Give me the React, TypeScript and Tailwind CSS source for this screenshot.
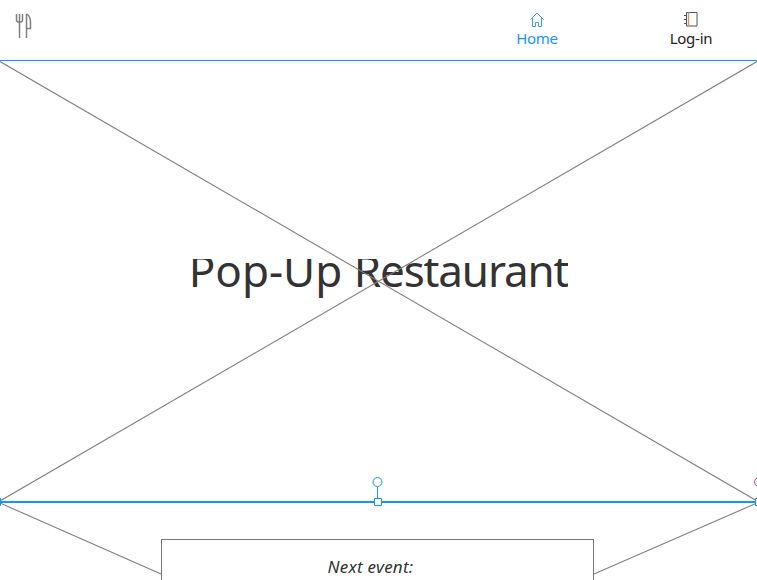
import React from 'react';

function CutleryLogo() {
  return (
    <svg className="block" width="18" height="26" viewBox="0 0 18 26" fill="none" stroke="#808080" strokeWidth="1.5">
      <path d="M1.500 1v6q0 2 2 2h2q2 0 2-2V1M4.500 1v24M11.500 1v24M11 1.500h1.500q3 2 3 8.500v5.500h-4" />
    </svg>
  );
}

function HomeIcon() {
  return (
    <svg className="block" width="14" height="15" viewBox="0 0 14 15" fill="none" stroke="#3d9ff5" strokeWidth="1">
      <path d="M.5 7.500 7 1l6.500 6.500M2.500 6v8.500h3V10.500h3v4h3V6" />
    </svg>
  );
}

function NotebookIcon() {
  return (
    <svg className="block" width="14" height="15" viewBox="0 0 14 15" fill="none" stroke="#555555" strokeWidth="1">
      <path d="M2.500 .5h10.500v13.500H2.500zM0 3.500h2.500M0 7.500h2.500M0 11.500h2.500" />
      <path d="M4.500 .5v13.500" stroke="#d59b5c" strokeWidth="1.500" />
    </svg>
  );
}

function NavItem({ label, active = false, children }: { label: string; active?: boolean; children: React.ReactNode }) {
  return (
    <a className={`flex w-[154px] flex-col items-center pt-3 text-[15px] leading-[22px] tracking-[-0.25px] ${active ? 'text-[#1496f5]' : 'text-[#222222]'}`}>
      {children}
      <span>{label}</span>
    </a>
  );
}

export default function App() {
  return (
    <div className="flex h-[580px] w-[757px] flex-col overflow-hidden bg-white font-['Noto_Sans',sans-serif] text-[#333333]">
      <header className="flex h-[61px] shrink-0 justify-between border-b border-[#0e9af5]">
        <div className="pt-[13px] pl-[15px]"><CutleryLogo /></div>
        <nav className="mr-[-11px] flex">
          <NavItem label="Home" active><HomeIcon /></NavItem>
          <NavItem label="Log-in"><NotebookIcon /></NavItem>
        </nav>
      </header>
      <section className="relative flex h-[440px] shrink-0 justify-center">
        <div className="mt-[198px] h-[45px] overflow-hidden">
          <h1 className="mt-[-19px] text-[44px] leading-[60px] whitespace-nowrap">Pop-Up <span className="tracking-[-1.150px]">Restaurant</span></h1>
        </div>
        <svg className="absolute inset-0" width="757" height="440" stroke="#808080" strokeWidth="1.100">
          <path d="M0 .5 757 440M757 .5 0 440" />
        </svg>
        <svg className="absolute top-[415px] left-0 z-10" width="757" height="32" fill="none" stroke="#0e9af5">
          <path d="M0 26H757" strokeWidth="2" />
          <path d="M377.500 11v12" />
          <circle cx="377.500" cy="6" r="4.500" />
          <path d="M374.500 22.500h7v7h-7zM-6.500 22.500h7v7h-7zM755.500 22.500h7v7h-7z" fill="white" />
          <circle cx="759" cy="6" r="4.500" stroke="#ee3e80" />
        </svg>
      </section>
      <section className="relative flex h-[79px] shrink-0 justify-center pt-[38px]">
        <svg className="absolute inset-0" width="757" height="79" fill="none" stroke="#808080" strokeWidth="1.100">
          <path d="M0 2 161 73M757 2 594 73" />
        </svg>
        <div className="relative mr-[2px] h-[60px] w-[433px] border border-b-0 border-[#777777] bg-white pt-4 pr-[14px] text-center text-[17px] leading-[22px] tracking-[0.250px] italic">Next event:</div>
      </section>
    </div>
  );
}
